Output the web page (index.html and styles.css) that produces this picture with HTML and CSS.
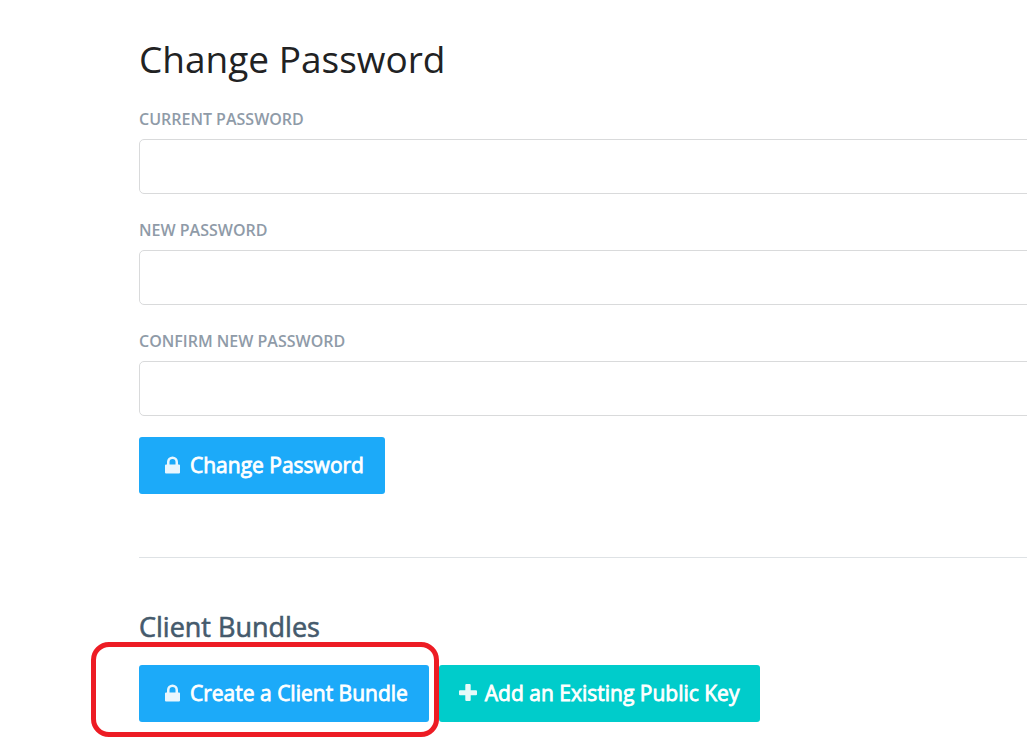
FILE: index.html
```html
<!DOCTYPE html>
<html lang="en">
<head>
<meta charset="utf-8">
<title>Account</title>
<link rel="stylesheet" href="styles.css">
</head>
<body>
<main class="page">
  <form class="password-form">
    <h1 class="title">Change Password</h1>
    <div class="fields">
      <div class="field">
        <label class="label" for="current">Current Password</label>
        <input class="input" id="current" type="password">
      </div>
      <div class="field">
        <label class="label" for="new">New Password</label>
        <input class="input" id="new" type="password">
      </div>
      <div class="field">
        <label class="label" for="confirm">Confirm New Password</label>
        <input class="input" id="confirm" type="password">
      </div>
    </div>
    <button class="button" type="button">
      <svg class="icon" viewBox="0 0 15 18" aria-hidden="true"><path fill-rule="evenodd" d="M2 8.500V6a5.500 5.500 0 0 1 11 0v2.500h1q1 0 1 1v7q0 1-1 1H1q-1 0-1-1v-7q0-1 1-1zM4.500 8.500h6V6a3 3 0 0 0-6 0z"/></svg>
      Change Password
    </button>
  </form>
  <hr class="divider">
  <section class="bundles">
    <h2 class="subtitle">Client Bundles</h2>
    <div class="actions">
      <div class="marked">
        <button class="button" type="button">
          <svg class="icon" viewBox="0 0 15 18" aria-hidden="true"><path fill-rule="evenodd" d="M2 8.500V6a5.500 5.500 0 0 1 11 0v2.500h1q1 0 1 1v7q0 1-1 1H1q-1 0-1-1v-7q0-1 1-1zM4.500 8.500h6V6a3 3 0 0 0-6 0z"/></svg>
          Create a Client Bundle
        </button>
      </div>
      <button class="button button-teal" type="button">
        <svg class="icon" viewBox="0 0 18 18" aria-hidden="true"><path d="M7.300 0h3.400q1 0 1 1v5.300H17q1 0 1 1v2.900q0 1-1 1h-5.300V16q0 1-1 1H7.300q-1 0-1-1v-4.800H1q-1 0-1-1V7.300q0-1 1-1h5.300V1q0-1 1-1z"/></svg>
        Add an Existing Public Key
      </button>
    </div>
  </section>
</main>
</body>
</html>
```
FILE: styles.css
```css
* { box-sizing: border-box; }
body { margin: 0; background: #fff; color: #212223; font-family: "Open Sans", sans-serif; overflow-x: hidden; }
.page { padding: 34px 0 30px 139px; }
.title { margin: 0 0 25px; font-size: 37px; line-height: 50px; font-weight: 400; }
.fields { display: flex; flex-direction: column; gap: 26px; margin-bottom: 21px; }
.label { display: block; margin-bottom: 10px; font-size: 16px; line-height: 20px; font-weight: 600; color: #8f9ba8; text-transform: uppercase; }
.input { display: block; width: calc(100% + 8px); height: 55px; padding: 0 20px; border: 1px solid #d9dadb; border-radius: 5px; background: #fff; font: inherit; }
.button { display: flex; align-items: center; gap: 10px; height: 57px; padding: 0 21px 2px 26px; border: 0; border-radius: 3px; background: #1caaf9; color: #fff; font: 400 21px/28px "Open Sans", sans-serif; white-space: nowrap; -webkit-text-stroke: 0.8px; }
.button-teal { padding: 0 21px 2px 20px; gap: 8px; background: #00cccb; }
.icon { height: 18px; fill: currentColor; stroke: none; opacity: 0.9; }
.divider { margin: 63px 0 49px; border: 0; border-top: 1px solid #dee2e5; }
.subtitle { margin: 0 0 18px; font-size: 27px; line-height: 40px; font-weight: 400; color: #455a6c; -webkit-text-stroke: 0.6px; }
.actions { display: flex; gap: 10px; }
.marked { position: relative; }
.marked::after { content: ""; position: absolute; inset: -23px -10px -15px -48px; border: 5px solid #ed1c24; border-radius: 18px; pointer-events: none; }
```
